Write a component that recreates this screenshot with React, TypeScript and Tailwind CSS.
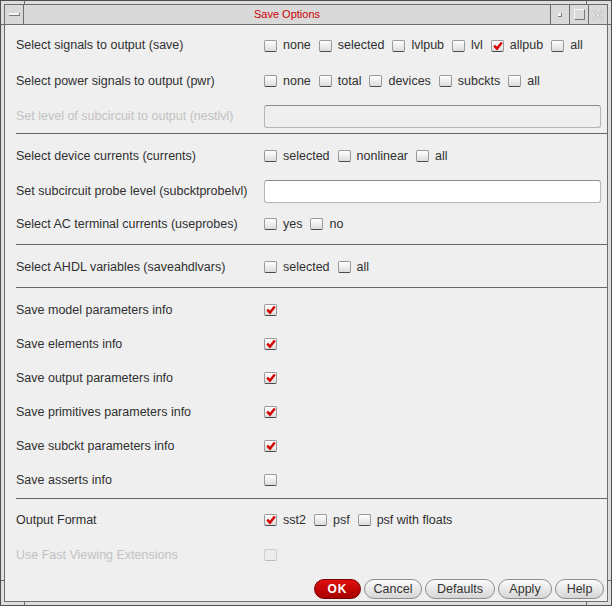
import React from "react";

const font = { fontFamily: '"Liberation Sans", Arial, sans-serif' };

function Check({ checked = false, disabled = false }: { checked?: boolean; disabled?: boolean }) {
  return (
    <span
      className={
        "relative inline-block w-[13px] h-[12px] shrink-0 rounded-[2px] border " +
        (disabled
          ? "border-[#cfcfcf] border-b-[#bdbdbd] bg-[#ececec]"
          : "border-[#9a9a9a] border-b-[#4a4a4a] bg-gradient-to-b from-[#ffffff] to-[#dcdcdc]")
      }
    >
      {checked && (
        <svg className="absolute left-[1px] top-[0px]" width="10" height="10" viewBox="0 0 10 10">
          <path d="M1.2 4.6 L4 7.6 L8.8 1.6" fill="none" stroke="#d40000" strokeWidth="2.4" strokeLinejoin="miter" />
        </svg>
      )}
    </span>
  );
}

function Opt({ label, checked = false }: { label: string; checked?: boolean }) {
  return (
    <span className="flex items-center gap-[6px]">
      <Check checked={checked} />
      <span>{label}</span>
    </span>
  );
}

function Row({
  label,
  h,
  disabled = false,
  children,
}: {
  label: string;
  h: string;
  disabled?: boolean;
  children?: React.ReactNode;
}) {
  return (
    <div className={"flex items-center " + h}>
      <div className={"w-[248px] ml-[11px] shrink-0 " + (disabled ? "text-[#c2c2c2]" : "text-[#2f2f2f]")}>
        {label}
      </div>
      <div className="flex items-center gap-[8px] text-[#2f2f2f]">{children}</div>
    </div>
  );
}

function Sep() {
  return <div className="h-px ml-[11px] bg-[#666666]" />;
}

function Input({ disabled = false }: { disabled?: boolean }) {
  return (
    <div
      className={
        "w-[337px] h-[23px] rounded-[3px] border border-[#b5b5b5] border-t-[#8c8c8c] " +
        (disabled ? "bg-[#efefef]" : "bg-white")
      }
    />
  );
}

function Btn({ label, w, primary = false }: { label: string; w: string; primary?: boolean }) {
  return (
    <div
      className={
        "h-[20px] rounded-full flex items-center justify-center border " +
        w +
        " " +
        (primary
          ? "bg-gradient-to-b from-[#e01010] to-[#a80000] border-[#7a0000] text-white font-bold text-[12px] tracking-[1px]"
          : "bg-gradient-to-b from-[#fbfbfb] to-[#d6d6d6] border-[#8d8d8d] text-[#333333] text-[12.5px]")
      }
    >
      {label}
    </div>
  );
}

export default function App() {
  return (
    <div className="relative w-[612px] h-[606px] border border-[#4f4f4f] bg-[#dedede] p-[3px]" style={font}>
      {/* frame marks */}
      <div className="absolute left-[23px] top-0 w-px h-[4px] bg-[#6a6a6a]" />
      <div className="absolute left-[585px] top-0 w-px h-[4px] bg-[#6a6a6a]" />
      <div className="absolute left-0 top-[23px] w-[4px] h-px bg-[#6a6a6a]" />
      <div className="absolute right-0 top-[23px] w-[4px] h-px bg-[#6a6a6a]" />
      <div className="absolute left-[23px] bottom-0 w-px h-[4px] bg-[#6a6a6a]" />
      <div className="absolute left-[585px] bottom-0 w-px h-[4px] bg-[#6a6a6a]" />
      <div className="absolute left-0 top-[579px] w-[4px] h-px bg-[#6a6a6a]" />
      <div className="absolute right-0 top-[579px] w-[4px] h-px bg-[#6a6a6a]" />

      <div className="w-full h-full border border-[#6e6e6e] flex flex-col bg-[#efefef]">
        {/* title bar */}
        <div className="h-[20px] shrink-0 flex border-b border-[#6e6e6e] bg-[#d9d9d9]">
          <div className="w-[19px] h-full border-r border-[#6e6e6e] flex items-center justify-center">
            <div className="w-[11px] h-[3px] bg-[#f4f4f4] border-b border-r border-[#7a7a7a]" />
          </div>
          <div className="flex-1 flex items-center justify-center text-[11px] text-[#cc0000]">Save Options</div>
          <div className="w-[19px] h-full border-l border-[#6e6e6e] flex items-center justify-center">
            <div className="w-[4px] h-[4px] bg-[#f4f4f4] border-b border-r border-[#7a7a7a]" />
          </div>
          <div className="w-[19px] h-full border-l border-[#6e6e6e] flex items-center justify-center">
            <div className="w-[11px] h-[11px] border-t border-l border-[#f8f8f8] border-b border-r border-b-[#7a7a7a] border-r-[#7a7a7a]" />
          </div>
          <div className="w-[19px] h-full border-l border-[#6e6e6e] flex items-center justify-center">
            <svg width="14" height="14" viewBox="0 0 14 14">
              <path d="M2 2 L12 12 M12 2 L2 12" stroke="#bdbdbd" strokeWidth="2.2" fill="none" />
              <path d="M2 2 L12 12 M12 2 L2 12" stroke="#f6f6f6" strokeWidth="0.8" fill="none" />
            </svg>
          </div>
        </div>

        {/* content */}
        <div className="flex-1 flex flex-col text-[12.5px]">
          <div className="pt-[3px]">
            <Row label="Select signals to output (save)" h="h-[35px]">
              <Opt label="none" />
              <Opt label="selected" />
              <Opt label="lvlpub" />
              <Opt label="lvl" />
              <Opt label="allpub" checked />
              <Opt label="all" />
            </Row>
            <Row label="Select power signals to output (pwr)" h="h-[36px]">
              <Opt label="none" />
              <Opt label="total" />
              <Opt label="devices" />
              <Opt label="subckts" />
              <Opt label="all" />
            </Row>
            <Row label="Set level of subcircuit to output (nestlvl)" h="h-[34px]" disabled>
              <Input disabled />
            </Row>
          </div>
          <Sep />
          <div className="pt-[5px] pb-[5px]">
            <Row label="Select device currents (currents)" h="h-[34px]">
              <Opt label="selected" />
              <Opt label="nonlinear" />
              <Opt label="all" />
            </Row>
            <Row label="Set subcircuit probe level (subcktprobelvl)" h="h-[36px]">
              <Input />
            </Row>
            <Row label="Select AC terminal currents (useprobes)" h="h-[30px]">
              <Opt label="yes" />
              <Opt label="no" />
            </Row>
          </div>
          <Sep />
          <div className="pt-[5px] pb-[3px]">
            <Row label="Select AHDL variables (saveahdlvars)" h="h-[34px]">
              <Opt label="selected" />
              <Opt label="all" />
            </Row>
          </div>
          <Sep />
          <div className="pt-[5px] pb-[1px]">
            <Row label="Save model parameters info" h="h-[34px]">
              <Check checked />
            </Row>
            <Row label="Save elements info" h="h-[34px]">
              <Check checked />
            </Row>
            <Row label="Save output parameters info" h="h-[34px]">
              <Check checked />
            </Row>
            <Row label="Save primitives parameters info" h="h-[34px]">
              <Check checked />
            </Row>
            <Row label="Save subckt parameters info" h="h-[34px]">
              <Check checked />
            </Row>
            <Row label="Save asserts info" h="h-[34px]">
              <Check />
            </Row>
          </div>
          <Sep />
          <div className="pt-[4px]">
            <Row label="Output Format" h="h-[34px]">
              <Opt label="sst2" checked />
              <Opt label="psf" />
              <Opt label="psf with floats" />
            </Row>
            <Row label="Use Fast Viewing Extensions" h="h-[36px]" disabled>
              <Check disabled />
            </Row>
          </div>
          <div className="mt-[6px] flex justify-end gap-[3px] pr-[3px]">
            <Btn label="OK" w="w-[47px]" primary />
            <Btn label="Cancel" w="w-[58px]" />
            <Btn label="Defaults" w="w-[70px]" />
            <Btn label="Apply" w="w-[54px]" />
            <Btn label="Help" w="w-[49px]" />
          </div>
        </div>
      </div>
    </div>
  );
}
